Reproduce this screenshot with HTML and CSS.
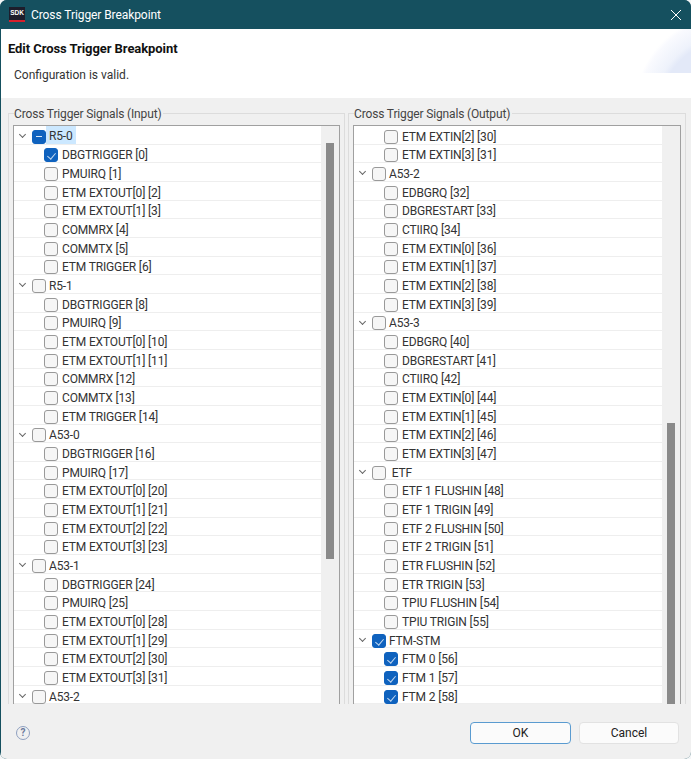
FILE: index.html
```html
<!DOCTYPE html>
<html lang="en">
<head>
  <meta charset="UTF-8">
  <title>Cross Trigger Breakpoint</title>
  <link rel="stylesheet" href="styles.css">
</head>
<body>
  <div class="dialog">
    <div class="titlebar">
      <div class="sdk-logo">SDK</div>
      <div class="title-text">Cross Trigger Breakpoint</div>
      <svg class="close-icon" width="12" height="12" viewBox="0 0 12 12"><path d="M1 1L11 11M11 1L1 11" stroke="#fff" stroke-width="1" fill="none"/></svg>
    </div>
    <div class="header">
      <h2>Edit Cross Trigger Breakpoint</h2>
      <p>Configuration is valid.</p>
      <div class="header-art"></div>
    </div>
    <div class="content">
      <div class="group group-input">
        <div class="legend">Cross Trigger Signals (Input)</div>
        <div class="tree">
          <div class="rows">
            <div class="row parent"><i class="arrow"></i><span class="box mixed"></span><span class="label selected">R5-0</span></div>
            <div class="row"><span class="box checked"></span><span class="label">DBGTRIGGER [0]</span></div>
            <div class="row"><span class="box"></span><span class="label">PMUIRQ [1]</span></div>
            <div class="row"><span class="box"></span><span class="label">ETM EXTOUT[0] [2]</span></div>
            <div class="row"><span class="box"></span><span class="label">ETM EXTOUT[1] [3]</span></div>
            <div class="row"><span class="box"></span><span class="label">COMMRX [4]</span></div>
            <div class="row"><span class="box"></span><span class="label">COMMTX [5]</span></div>
            <div class="row"><span class="box"></span><span class="label">ETM TRIGGER [6]</span></div>
            <div class="row parent"><i class="arrow"></i><span class="box"></span><span class="label">R5-1</span></div>
            <div class="row"><span class="box"></span><span class="label">DBGTRIGGER [8]</span></div>
            <div class="row"><span class="box"></span><span class="label">PMUIRQ [9]</span></div>
            <div class="row"><span class="box"></span><span class="label">ETM EXTOUT[0] [10]</span></div>
            <div class="row"><span class="box"></span><span class="label">ETM EXTOUT[1] [11]</span></div>
            <div class="row"><span class="box"></span><span class="label">COMMRX [12]</span></div>
            <div class="row"><span class="box"></span><span class="label">COMMTX [13]</span></div>
            <div class="row"><span class="box"></span><span class="label">ETM TRIGGER [14]</span></div>
            <div class="row parent"><i class="arrow"></i><span class="box"></span><span class="label">A53-0</span></div>
            <div class="row"><span class="box"></span><span class="label">DBGTRIGGER [16]</span></div>
            <div class="row"><span class="box"></span><span class="label">PMUIRQ [17]</span></div>
            <div class="row"><span class="box"></span><span class="label">ETM EXTOUT[0] [20]</span></div>
            <div class="row"><span class="box"></span><span class="label">ETM EXTOUT[1] [21]</span></div>
            <div class="row"><span class="box"></span><span class="label">ETM EXTOUT[2] [22]</span></div>
            <div class="row"><span class="box"></span><span class="label">ETM EXTOUT[3] [23]</span></div>
            <div class="row parent"><i class="arrow"></i><span class="box"></span><span class="label">A53-1</span></div>
            <div class="row"><span class="box"></span><span class="label">DBGTRIGGER [24]</span></div>
            <div class="row"><span class="box"></span><span class="label">PMUIRQ [25]</span></div>
            <div class="row"><span class="box"></span><span class="label">ETM EXTOUT[0] [28]</span></div>
            <div class="row"><span class="box"></span><span class="label">ETM EXTOUT[1] [29]</span></div>
            <div class="row"><span class="box"></span><span class="label">ETM EXTOUT[2] [30]</span></div>
            <div class="row"><span class="box"></span><span class="label">ETM EXTOUT[3] [31]</span></div>
            <div class="row parent"><i class="arrow"></i><span class="box"></span><span class="label">A53-2</span></div>
          </div>
          <div class="scrollbar thumb-left"><div class="thumb"></div></div>
        </div>
      </div>
      <div class="group group-output">
        <div class="legend">Cross Trigger Signals (Output)</div>
        <div class="tree">
          <div class="rows">
            <div class="row"><span class="box"></span><span class="label">ETM EXTIN[2] [30]</span></div>
            <div class="row"><span class="box"></span><span class="label">ETM EXTIN[3] [31]</span></div>
            <div class="row parent"><i class="arrow"></i><span class="box"></span><span class="label">A53-2</span></div>
            <div class="row"><span class="box"></span><span class="label">EDBGRQ [32]</span></div>
            <div class="row"><span class="box"></span><span class="label">DBGRESTART [33]</span></div>
            <div class="row"><span class="box"></span><span class="label">CTIIRQ [34]</span></div>
            <div class="row"><span class="box"></span><span class="label">ETM EXTIN[0] [36]</span></div>
            <div class="row"><span class="box"></span><span class="label">ETM EXTIN[1] [37]</span></div>
            <div class="row"><span class="box"></span><span class="label">ETM EXTIN[2] [38]</span></div>
            <div class="row"><span class="box"></span><span class="label">ETM EXTIN[3] [39]</span></div>
            <div class="row parent"><i class="arrow"></i><span class="box"></span><span class="label">A53-3</span></div>
            <div class="row"><span class="box"></span><span class="label">EDBGRQ [40]</span></div>
            <div class="row"><span class="box"></span><span class="label">DBGRESTART [41]</span></div>
            <div class="row"><span class="box"></span><span class="label">CTIIRQ [42]</span></div>
            <div class="row"><span class="box"></span><span class="label">ETM EXTIN[0] [44]</span></div>
            <div class="row"><span class="box"></span><span class="label">ETM EXTIN[1] [45]</span></div>
            <div class="row"><span class="box"></span><span class="label">ETM EXTIN[2] [46]</span></div>
            <div class="row"><span class="box"></span><span class="label">ETM EXTIN[3] [47]</span></div>
            <div class="row parent"><i class="arrow"></i><span class="box"></span><span class="label">&nbsp;ETF</span></div>
            <div class="row"><span class="box"></span><span class="label">ETF 1 FLUSHIN [48]</span></div>
            <div class="row"><span class="box"></span><span class="label">ETF 1 TRIGIN [49]</span></div>
            <div class="row"><span class="box"></span><span class="label">ETF 2 FLUSHIN [50]</span></div>
            <div class="row"><span class="box"></span><span class="label">ETF 2 TRIGIN [51]</span></div>
            <div class="row"><span class="box"></span><span class="label">ETR FLUSHIN [52]</span></div>
            <div class="row"><span class="box"></span><span class="label">ETR TRIGIN [53]</span></div>
            <div class="row"><span class="box"></span><span class="label">TPIU FLUSHIN [54]</span></div>
            <div class="row"><span class="box"></span><span class="label">TPIU TRIGIN [55]</span></div>
            <div class="row parent"><i class="arrow"></i><span class="box checked"></span><span class="label">FTM-STM</span></div>
            <div class="row"><span class="box checked"></span><span class="label">FTM 0 [56]</span></div>
            <div class="row"><span class="box checked"></span><span class="label">FTM 1 [57]</span></div>
            <div class="row"><span class="box checked"></span><span class="label">FTM 2 [58]</span></div>
          </div>
          <div class="scrollbar thumb-right"><div class="thumb"></div></div>
        </div>
      </div>
    </div>
    <div class="footer">
      <div class="help">?</div>
      <div class="buttons">
        <button class="default-btn">OK</button>
        <button>Cancel</button>
      </div>
    </div>
  </div>
</body>
</html>
```

FILE: styles.css
```css
* {
  box-sizing: border-box;
}
html, body {
  height: 100%;
}
body {
  margin: 0;
  background: #f4f6f7;
  font-family: Roboto, "Open Sans", Arial, sans-serif;
  font-size: 12px;
  color: #333;
  overflow: hidden;
}
.dialog {
  height: 759px;
  display: flex;
  flex-direction: column;
  padding-left: 1px;
  background: #15505f;
  border-radius: 7px;
  overflow: hidden;
}
.titlebar {
  height: 29px;
  flex-shrink: 0;
  margin-left: -1px;
  display: flex;
  align-items: center;
  padding: 0 9px;
  color: #fff;
  background: #15505f;
}
.sdk-logo {
  width: 16px;
  height: 15px;
  background: #1d1d2b;
  border-bottom: 2px solid #d8202c;
  color: #fff;
  font-family: "Liberation Sans", sans-serif;
  font-size: 6.5px;
  font-weight: 700;
  line-height: 12px;
  text-align: center;
}
.title-text {
  margin-left: 6px;
  flex: 1;
  letter-spacing: -0.08px;
}
.header {
  position: relative;
  height: 69px;
  flex-shrink: 0;
  background: #fff;
  padding: 11px 7px 0;
}
.header h2 {
  margin: 0;
  font-size: 13px;
  font-weight: 700;
  letter-spacing: -0.07px;
  color: #111;
  line-height: 17px;
}
.header p {
  margin: 10px 0 0 6px;
  line-height: 17px;
  color: #333;
}
.header-art {
  position: absolute;
  right: 0;
  top: 0;
  width: 50px;
  height: 44px;
  background: radial-gradient(circle at 89px 81px, #e3e9f8 0 70px, #eef2fb 76px, #f9fafe 92px, #fff 96px);
}
.content {
  height: 606px;
  flex-shrink: 0;
  background: #f0f0f0;
  display: flex;
  padding: 15px 0 0 7px;
  gap: 3px;
  overflow: hidden;
}
.group {
  position: relative;
  border: 1px solid #dcdcdc;
  padding: 11px 4px 0;
  height: 700px;
}
.group-input {
  width: 337px;
}
.group-output {
  width: 338px;
}
.legend {
  position: absolute;
  left: 5px;
  top: -7px;
  background: #f0f0f0;
  padding-right: 2px;
  line-height: 15px;
  letter-spacing: -0.15px;
  color: #444;
}
.tree {
  display: flex;
  height: 680px;
  background: #f0f0f0;
  border: 1px solid #a0a0a0;
  border-bottom: none;
}
.rows {
  flex: 1;
  background: #fff;
}
.row {
  height: 18.67px;
  display: flex;
  align-items: center;
  padding: 4px 0 0 30px;
  border-bottom: 1px solid #eee;
}
.row .box {
  margin-right: 1px;
}
.row.parent {
  padding-left: 18px;
  position: relative;
}
.row.parent .box {
  margin-right: 0;
}
.arrow {
  position: absolute;
  left: 6px;
  top: 6px;
  width: 5px;
  height: 5px;
  border-right: 1px solid #666;
  border-bottom: 1px solid #666;
  transform: rotate(45deg);
}
.box {
  width: 14px;
  height: 14px;
  border: 1px solid #999;
  border-radius: 3px;
  background: #f6f6f6;
  flex-shrink: 0;
  position: relative;
}
.box.checked, .box.mixed {
  background: #0f62be;
  border-color: #0f62be;
}
.box.checked::after {
  content: "";
  position: absolute;
  left: 4px;
  top: 2px;
  width: 4px;
  height: 7px;
  border-right: 1px solid #c4d9f0;
  border-bottom: 1px solid #c4d9f0;
  transform: rotate(40deg);
}
.box.mixed::after {
  content: "";
  position: absolute;
  left: 3px;
  top: 5px;
  width: 6px;
  height: 1px;
  background: #dce9f7;
}
.label {
  padding: 0 3px;
  letter-spacing: -0.15px;
  color: #333;
}
.label.selected {
  align-self: stretch;
  margin-top: -4px;
  padding-top: 3px;
  line-height: 15px;
  background: #cce8ff;
}
.scrollbar {
  width: 18px;
  position: relative;
}
.thumb {
  position: absolute;
  left: 5px;
  width: 8px;
  background: #8a8a8a;
}
.thumb-left .thumb {
  top: 17px;
  height: 416px;
}
.thumb-right .thumb {
  top: 297px;
  height: 400px;
}
.footer {
  flex: 1;
  background: #f0f0f0;
  display: flex;
  align-items: center;
  justify-content: space-between;
  padding: 2px 12px 0 15px;
}
.help {
  width: 14px;
  height: 14px;
  border: 1.5px solid #8fa0c0;
  border-radius: 50%;
  text-align: center;
  line-height: 11px;
  font-size: 10px;
  font-weight: 700;
  color: #6b7a9c;
}
.buttons {
  display: flex;
  gap: 8px;
}
button {
  width: 100px;
  height: 22px;
  font: inherit;
  color: #222;
  background: #fbfbfb;
  border: 1px solid #e2e2e2;
  border-radius: 4px;
}
.default-btn {
  width: 101px;
  border: 1px solid #5a9bd0;
}
```
